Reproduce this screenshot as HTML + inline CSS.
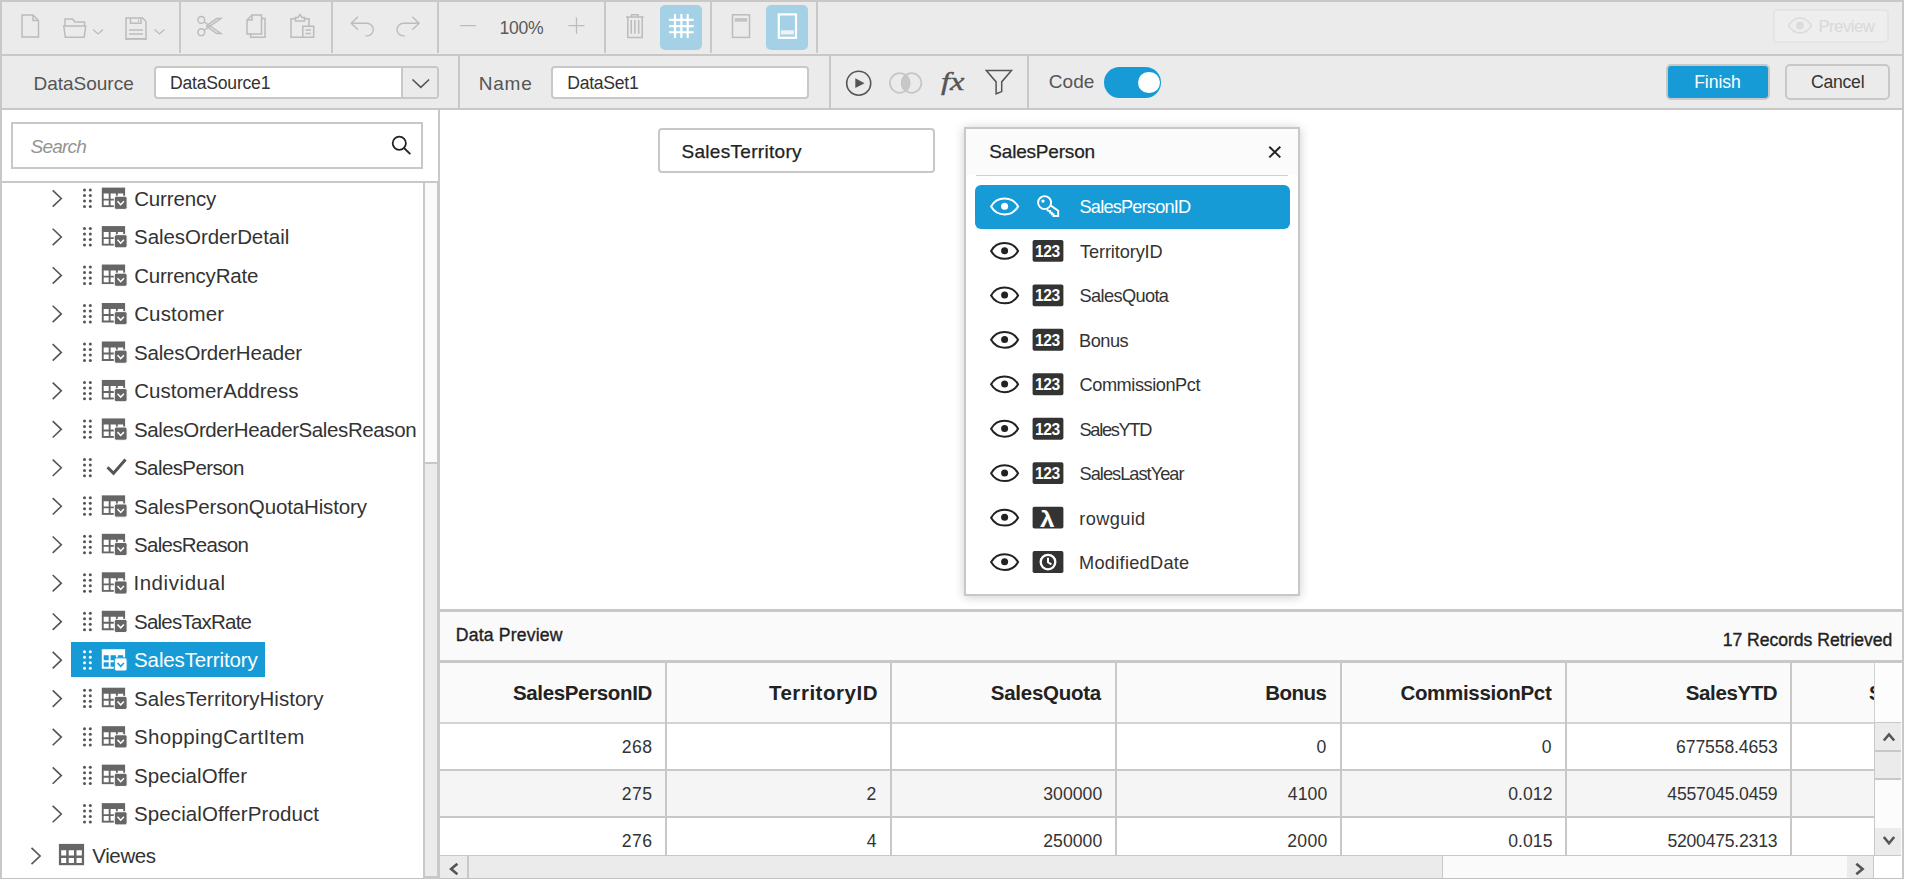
<!DOCTYPE html>
<html>
<head>
<meta charset="utf-8">
<title>DataSet Designer</title>
<style>
*{box-sizing:border-box;margin:0;padding:0}
html,body{width:1905px;height:881px;overflow:hidden;background:#fff}
body{font-family:"Liberation Sans",sans-serif;color:#333;position:relative}
.abs{position:absolute}
.t{position:absolute;white-space:nowrap;line-height:1}
.vsep{position:absolute;width:2px;background:#c8c8c8}
</style>
</head>
<body>
<div class="abs" style="left:2px;top:2px;width:1900px;height:52px;background:#ebebeb"></div>
<div class="abs" style="left:2px;top:54px;width:1900px;height:2px;background:#c8c8c8"></div>
<div class="abs" style="left:2px;top:56px;width:1900px;height:52px;background:#ebebeb"></div>
<div class="abs" style="left:2px;top:108px;width:1900px;height:2px;background:#c8c8c8"></div>
<div class="vsep" style="left:179px;top:2px;height:51px"></div>
<div class="vsep" style="left:331px;top:2px;height:51px"></div>
<div class="vsep" style="left:437px;top:2px;height:51px"></div>
<div class="vsep" style="left:604px;top:2px;height:51px"></div>
<div class="vsep" style="left:710px;top:2px;height:51px"></div>
<div class="vsep" style="left:816px;top:2px;height:51px"></div>
<div class="abs" style="left:660px;top:5px;width:42px;height:45px;border-radius:5px;background:#a5d1e6"></div>
<div class="abs" style="left:766px;top:5px;width:42px;height:45px;border-radius:5px;background:#a5d1e6"></div>
<div class="t" id="zoomtxt" style="top:20.00px;font-size:17.6px;color:#5a5a5a;letter-spacing:-0.300px;left:499.55px;">100%</div>
<div class="abs" style="left:1773px;top:9px;width:116px;height:34px;border:2px solid #e5e5e5;border-radius:4px;background:#eeeeee"></div>
<div class="t" id="prevtxt" style="top:19.00px;font-size:16.8px;color:#d9d9d9;letter-spacing:-0.533px;left:1818.4px;">Preview</div>
<svg class="abs" style="left:0;top:0" width="1905" height="56" viewBox="0 0 1905 56" fill="none" stroke="#bcbcbc" stroke-width="1.5">
<!-- new -->
<path d="M22 15h11l5.5 5.500v16.500h-16.500z M33 15v5.500h5.500"/>
<!-- open -->
<path d="M65 26v-7h7.500l2.500 3h9.500v4 M63.800 26h21.900l-1.500 11.200h-18.900z"/>
<path d="M93 29.500l5 4.500l5-4.500" stroke-width="1.300"/>
<!-- save -->
<path d="M126 18h16.500l3.500 3.500v17.300h-20z M130.500 18v5.300h10.500v-5.300 M129 30h14 M129 34h14"/>
<path d="M125.300 39.200h21.400" stroke-width="1"/>
<path d="M138.500 19.500v2.500" stroke-width="1"/>
<path d="M154.500 29.500l5 4.500l5-4.500" stroke-width="1.300"/>
<!-- cut -->
<circle cx="201.300" cy="19.900" r="3.400"/><circle cx="201.300" cy="32.200" r="3.400"/>
<path d="M204.300 22l16.500 11.500h-4l-10.500-7.300 M204.300 30.100l16.500-11.500h-4l-10.500 7.300"/>
<!-- copy -->
<path d="M247 20l5-5h9.500v19h-14.500z M252 15v5h-5 M261.500 18.500h3.500v18.800h-14.300v-3.300"/>
<!-- paste -->
<path d="M295.500 18.700h-4.500v18.600h11.500 M304.500 18.700h4.500v7.300 M295.500 21v-3.500h2.500l2-3l2 3h2.500v3.500z"/>
<path d="M302.800 26.200h10.900v11.100h-10.900z M305.500 30h5.500 M305.500 33.600h5.500"/>
<!-- undo -->
<path d="M358 16.800l-6.800 6.500l6.800 6.500 M351.500 23.300h15.500a6.300 6.300 0 0 1 0 12.600h-1.500" stroke-width="1.400"/>
<!-- redo -->
<path d="M412.300 16.800l6.800 6.500l-6.800 6.500 M418.800 23.300h-15.500a6.300 6.300 0 0 0 0 12.600h1.500" stroke-width="1.400"/>
<!-- zoom -/+ -->
<path d="M460 25.600h16 M568.500 25.600h16 M576.500 17.500v16.200" stroke-width="1.300"/>
<!-- trash -->
<path d="M626 17.100h17.600 M631.500 17v-2.200h6.500v2.200 M627.800 17.100v20.300h14.400v-20.300 M631.200 20v13.700 M634.900 20v13.700 M638.700 20v13.700"/>
<!-- grid -->
<path d="M675 14.100v23.800 M681.400 14.100v23.800 M687.700 14.100v23.800 M669.100 19.900h24.600 M669.100 26.100h24.600 M669.100 32.300h24.600" stroke="#fff" stroke-width="2.100"/>
<!-- header -->
<rect x="732.500" y="14.800" width="17" height="22.600"/>
<rect x="734.700" y="18.100" width="12.400" height="3.600" fill="#c4c4c4" stroke="none"/>
<!-- footer -->
<rect x="778.800" y="14.400" width="17.200" height="23.400" stroke="#fff" stroke-width="2.200"/>
<rect x="780.900" y="30.300" width="12.900" height="4.100" fill="#f2f2f2" stroke="none"/>
<!-- preview eye -->
<g stroke="#dcdcdc" stroke-width="1.500">
<path d="M1788.500 25.500c4-6.500 8-7.500 11.500-7.500s7.500 1 11.500 7.500c-4 6.500-8 7.500-11.500 7.500s-7.500-1-11.500-7.500z"/>
<circle cx="1800" cy="25.500" r="3.300" fill="#dcdcdc"/>
</g>
</svg>
<div class="t" id="lblds" style="top:74.00px;font-size:19.05px;color:#555;letter-spacing:-0.028px;left:33.5px;">DataSource</div>
<div class="abs" style="left:154px;top:66px;width:285px;height:33px;border:2px solid #c8c8c8;border-radius:4px;background:#fff"></div>
<div class="abs" style="left:401px;top:68px;width:36px;height:29px;border-left:2px solid #c8c8c8;background:#ebebeb;border-radius:0 2px 2px 0"></div>
<div class="t" id="ddtxt" style="top:75.00px;font-size:17.6px;color:#333;letter-spacing:-0.210px;left:169.9px;">DataSource1</div>
<div class="vsep" style="left:458px;top:56px;height:52px"></div>
<div class="t" id="lblname" style="top:74.00px;font-size:19.05px;color:#555;letter-spacing:0.717px;left:478.8px;">Name</div>
<div class="abs" style="left:551px;top:66px;width:258px;height:33px;border:2px solid #c8c8c8;border-radius:4px;background:#fff"></div>
<div class="t" id="nametxt" style="top:75.00px;font-size:17.6px;color:#333;letter-spacing:-0.264px;left:567.2px;">DataSet1</div>
<div class="vsep" style="left:829px;top:56px;height:52px"></div>
<div class="vsep" style="left:1027px;top:56px;height:52px"></div>
<div class="t" id="lblcode" style="top:72.00px;font-size:19.05px;color:#555;letter-spacing:0.083px;left:1048.7px;">Code</div>
<div class="abs" style="left:1103.5px;top:67px;width:57.5px;height:31px;border-radius:16px;background:#179bd7"></div>
<div class="abs" style="left:1138.3px;top:71.8px;width:21.6px;height:21.6px;border-radius:50%;background:#fff"></div>
<div class="abs" style="left:1666px;top:64px;width:104px;height:36px;border:2px solid #c8c8c8;border-radius:5px;background:#179bd7"></div>
<div class="t" id="btnfinish" style="top:74.00px;font-size:17.6px;color:#fff;letter-spacing:-0.060px;left:1694.2px;">Finish</div>
<div class="abs" style="left:1785px;top:64px;width:105px;height:36px;border:2px solid #c8c8c8;border-radius:5px;background:#ebebeb"></div>
<div class="t" id="btncancel" style="top:74.00px;font-size:17.6px;color:#333;letter-spacing:-0.210px;left:1810.9px;">Cancel</div>
<div class="t" style="top:69.00px;font-size:25px;color:#555;left:940.5px;font-family:&quot;Liberation Serif&quot;,serif;-webkit-text-stroke:0.4px #555;transform:scaleX(1.3);transform-origin:0 0;"><i>fx</i></div>
<svg class="abs" style="left:0;top:56px" width="1905" height="54" viewBox="0 56 1905 54" fill="none" stroke="#555" stroke-width="1.6">
<path d="M412.500 79.500l8.300 7.800l8.300-7.800"/>
<circle cx="858.700" cy="83.200" r="12"/>
<path d="M855.300 78.300l9.200 4.900l-9.200 4.900z" fill="#555" stroke="none"/>
<g stroke="#c6c6c6" stroke-width="1.700">
<circle cx="899.700" cy="83" r="9.800"/><circle cx="911.600" cy="83" r="9.800"/>
<path d="M905.650 75.200a9.800 9.800 0 0 1 0 15.600a9.800 9.800 0 0 1 0-15.600z" fill="#c8c8c8"/>
</g>
<path d="M986.300 70.400h25.200l-9.800 11.500v9.700l-5.600 2.200v-11.900z" stroke-width="1.500" stroke-linejoin="miter"/>
</svg>
<div class="abs" style="left:438px;top:110px;width:2px;height:769px;background:#c8c8c8"></div>
<div class="abs" style="left:11px;top:122px;width:412px;height:47px;border:2px solid #c8c8c8;background:#fff"></div>
<div class="t" id="search" style="top:137.00px;font-size:19.05px;color:#949494;letter-spacing:-0.800px;left:30.5px;"><i>Search</i></div>
<div class="abs" style="left:2px;top:181px;width:436px;height:2px;background:#c8c8c8"></div>
<div class="abs" style="left:423px;top:183px;width:15px;height:696px;background:#fafafa;border-left:2px solid #c8c8c8;border-right:1px solid #c8c8c8"></div>
<div class="abs" style="left:425px;top:462px;width:12px;height:417px;background:#ebebeb;border-top:2px solid #c8c8c8"></div>
<div class="t" id="tree0" style="top:189.00px;font-size:20.5px;color:#333;letter-spacing:-0.143px;left:134.15px;">Currency</div>
<div class="t" id="tree1" style="top:227.00px;font-size:20.5px;color:#333;letter-spacing:-0.060px;left:134.05px;">SalesOrderDetail</div>
<div class="t" id="tree2" style="top:266.00px;font-size:20.5px;color:#333;letter-spacing:-0.209px;left:134.15px;">CurrencyRate</div>
<div class="t" id="tree3" style="top:304.00px;font-size:20.5px;color:#333;letter-spacing:0.157px;left:134.15px;">Customer</div>
<div class="t" id="tree4" style="top:343.00px;font-size:20.5px;color:#333;letter-spacing:-0.190px;left:134.05px;">SalesOrderHeader</div>
<div class="t" id="tree5" style="top:381.00px;font-size:20.5px;color:#333;letter-spacing:0.025px;left:134.15px;">CustomerAddress</div>
<div class="t" id="tree6" style="top:420.00px;font-size:20.5px;color:#333;letter-spacing:-0.398px;left:134.05px;">SalesOrderHeaderSalesReason</div>
<div class="t" id="tree7" style="top:458.00px;font-size:20.5px;color:#333;letter-spacing:-0.600px;left:134.05px;">SalesPerson</div>
<div class="t" id="tree8" style="top:497.00px;font-size:20.5px;color:#333;letter-spacing:-0.132px;left:134.05px;">SalesPersonQuotaHistory</div>
<div class="t" id="tree9" style="top:535.00px;font-size:20.5px;color:#333;letter-spacing:-0.715px;left:134.05px;">SalesReason</div>
<div class="t" id="tree10" style="top:573.00px;font-size:20.5px;color:#333;letter-spacing:0.567px;left:133.4px;">Individual</div>
<div class="t" id="tree11" style="top:612.00px;font-size:20.5px;color:#333;letter-spacing:-0.777px;left:134.05px;">SalesTaxRate</div>
<div class="abs" style="left:71px;top:642px;width:194px;height:35px;background:#179bd7"></div>
<div class="t" id="tree12" style="top:650.00px;font-size:20.5px;color:#fff;letter-spacing:-0.123px;left:134.05px;">SalesTerritory</div>
<div class="t" id="tree13" style="top:689.00px;font-size:20.5px;color:#333;letter-spacing:0.012px;left:134.05px;">SalesTerritoryHistory</div>
<div class="t" id="tree14" style="top:727.00px;font-size:20.5px;color:#333;letter-spacing:0.333px;left:134.05px;">ShoppingCartItem</div>
<div class="t" id="tree15" style="top:766.00px;font-size:20.5px;color:#333;letter-spacing:0.059px;left:134.05px;">SpecialOffer</div>
<div class="t" id="tree16" style="top:804.00px;font-size:20.5px;color:#333;letter-spacing:0.106px;left:134.05px;">SpecialOfferProduct</div>
<svg class="abs" style="left:0;top:110px" width="440" height="771" viewBox="0 110 440 771">
<defs>
<g id="tbl">
<rect x="0" y="0" width="23.300" height="19.500" fill="currentColor"/>
<path d="M1.900 6h5v5.100h-5z M8.800 6h5.300v5.100h-5.300z M16 6h5.400v5.100h-5.400z M1.900 13h5v4.600h-5z M8.800 13h5.300v4.600h-5.300z M16 13h5.400v4.600h-5.400z" fill="var(--bg,#fff)"/>
</g>
<g id="tblb">
<use href="#tbl"/>
<rect x="12.500" y="8.600" width="12.800" height="13.200" rx="2" fill="currentColor" stroke="var(--bg,#fff)" stroke-width="1"/>
<path d="M15.700 13.700l3.200 3.400l3.200-3.400" fill="none" stroke="var(--bg,#fff)" stroke-width="1.500"/>
</g>
<g id="dots" fill="currentColor">
<circle cx="1.2" cy="1.2" r="1.500"/><circle cx="7.0" cy="1.2" r="1.500"/><circle cx="1.2" cy="6.7" r="1.500"/><circle cx="7.0" cy="6.7" r="1.500"/><circle cx="1.2" cy="12.2" r="1.500"/><circle cx="7.0" cy="12.2" r="1.500"/><circle cx="1.2" cy="17.6" r="1.500"/><circle cx="7.0" cy="17.6" r="1.500"/>
</g>
<path id="chev" d="M0 0l8.600 8.200l-8.600 8.200" fill="none" stroke="#555" stroke-width="1.600"/>
</defs>
<g fill="none" stroke="#222" stroke-width="1.800"><circle cx="399.300" cy="143.200" r="6.600"/><path d="M404 148l6.300 6.200"/></g>
<use href="#chev" x="52.700" y="190.30"/><use href="#dots" x="83.300" y="188.90" style="color:#555"/><use href="#tblb" x="101.800" y="187.60" style="color:#666;"/>
<use href="#chev" x="52.700" y="228.77"/><use href="#dots" x="83.300" y="227.37" style="color:#555"/><use href="#tblb" x="101.800" y="226.07" style="color:#666;"/>
<use href="#chev" x="52.700" y="267.24"/><use href="#dots" x="83.300" y="265.84" style="color:#555"/><use href="#tblb" x="101.800" y="264.54" style="color:#666;"/>
<use href="#chev" x="52.700" y="305.71"/><use href="#dots" x="83.300" y="304.31" style="color:#555"/><use href="#tblb" x="101.800" y="303.01" style="color:#666;"/>
<use href="#chev" x="52.700" y="344.18"/><use href="#dots" x="83.300" y="342.78" style="color:#555"/><use href="#tblb" x="101.800" y="341.48" style="color:#666;"/>
<use href="#chev" x="52.700" y="382.65"/><use href="#dots" x="83.300" y="381.25" style="color:#555"/><use href="#tblb" x="101.800" y="379.95" style="color:#666;"/>
<use href="#chev" x="52.700" y="421.12"/><use href="#dots" x="83.300" y="419.72" style="color:#555"/><use href="#tblb" x="101.800" y="418.42" style="color:#666;"/>
<use href="#chev" x="52.700" y="459.59"/><use href="#dots" x="83.300" y="458.19" style="color:#555"/><path d="M107.500 467.29l6 6l12-13.800" fill="none" stroke="#555" stroke-width="3"/>
<use href="#chev" x="52.700" y="498.06"/><use href="#dots" x="83.300" y="496.66" style="color:#555"/><use href="#tblb" x="101.800" y="495.36" style="color:#666;"/>
<use href="#chev" x="52.700" y="536.53"/><use href="#dots" x="83.300" y="535.13" style="color:#555"/><use href="#tblb" x="101.800" y="533.83" style="color:#666;"/>
<use href="#chev" x="52.700" y="575.00"/><use href="#dots" x="83.300" y="573.60" style="color:#555"/><use href="#tblb" x="101.800" y="572.30" style="color:#666;"/>
<use href="#chev" x="52.700" y="613.47"/><use href="#dots" x="83.300" y="612.07" style="color:#555"/><use href="#tblb" x="101.800" y="610.77" style="color:#666;"/>
<use href="#chev" x="52.700" y="651.94"/><use href="#dots" x="83.300" y="650.54" style="color:#fff"/><use href="#tblb" x="101.800" y="649.24" style="color:#fff;--bg:#179bd7;"/>
<use href="#chev" x="52.700" y="690.41"/><use href="#dots" x="83.300" y="689.01" style="color:#555"/><use href="#tblb" x="101.800" y="687.71" style="color:#666;"/>
<use href="#chev" x="52.700" y="728.88"/><use href="#dots" x="83.300" y="727.48" style="color:#555"/><use href="#tblb" x="101.800" y="726.18" style="color:#666;"/>
<use href="#chev" x="52.700" y="767.35"/><use href="#dots" x="83.300" y="765.95" style="color:#555"/><use href="#tblb" x="101.800" y="764.65" style="color:#666;"/>
<use href="#chev" x="52.700" y="805.82"/><use href="#dots" x="83.300" y="804.42" style="color:#555"/><use href="#tblb" x="101.800" y="803.12" style="color:#666;"/>
<use href="#chev" x="31.500" y="847.800"/><g><rect x="58.900" y="843.900" width="25.200" height="21.300" fill="#666"/><path d="M61.200 850.200h5v5.300h-5z M68.700 850.200h5.300v5.300h-5.300z M76.500 850.200h5.300v5.300h-5.300z M61.200 858h5v5h-5z M68.700 858h5.300v5h-5.300z M76.500 858h5.300v5h-5.300z" fill="#fff"/></g>
</svg>
<div class="t" id="views" style="top:846.00px;font-size:20.5px;color:#333;letter-spacing:-0.370px;left:92.25px;">Viewes</div>
<div class="abs" style="left:658px;top:128px;width:277px;height:45px;border:2px solid #c8c8c8;border-radius:4px;background:#fff"></div>
<div class="t" id="stbox" style="top:142.00px;font-size:19.05px;color:#222;letter-spacing:0.296px;left:681.45px;-webkit-text-stroke:0.25px #222;">SalesTerritory</div>
<div class="abs" style="left:964px;top:127px;width:336px;height:469px;border:2px solid #c8c8c8;background:#fff;box-shadow:0 1px 10px rgba(0,0,0,.2)"></div>
<div class="abs" style="left:966px;top:129px;width:332px;height:46px;background:#fbfbfb"></div>
<div class="abs" style="left:976px;top:175px;width:312px;height:1px;background:#cfcfcf"></div>
<div class="t" id="pophdr" style="top:142.00px;font-size:19.05px;color:#222;letter-spacing:-0.200px;left:989.25px;-webkit-text-stroke:0.25px #222;">SalesPerson</div>
<div class="abs" style="left:975px;top:185px;width:315px;height:44px;background:#179bd7;border-radius:6px"></div>
<svg class="abs" style="left:940px;top:110px" width="400" height="500" viewBox="940 110 400 500">
<defs>
<g id="eye" fill="none" stroke="currentColor" stroke-width="2" stroke-linejoin="miter">
<path d="M-13.500 0A15.500 15.500 0 0 1 13.500 0A15.500 15.500 0 0 1 -13.500 0z"/>
<circle cx="0" cy="-0.300" r="3.500" fill="currentColor" stroke="none"/>
</g>
<rect id="tybg" x="0" y="0" width="30.800" height="21.900" rx="1.800" fill="#333"/>
</defs>
<path d="M1269.300 146.800l11 10.600 M1280.300 146.800l-11 10.600" stroke="#222" stroke-width="2" fill="none"/>
<use href="#eye" x="1004.600" y="206.50" style="color:#fff"/><g transform="translate(1037 195.30)" fill="none" stroke="#fff" stroke-width="1.900"><circle cx="7.600" cy="7.300" r="6.500"/><circle cx="6" cy="5.800" r="1.700" fill="#fff" stroke="none"/><path d="M13.500 10.100l7.700 5.300v5.300h-4.700v-1.700h-1.700v-1.700h-1.700v-1.700h-1.900l-1.200-1.700"/></g>
<use href="#eye" x="1004.600" y="250.95" style="color:#222"/><use href="#tybg" x="1032.600" y="239.95"/>
<use href="#eye" x="1004.600" y="295.40" style="color:#222"/><use href="#tybg" x="1032.600" y="284.40"/>
<use href="#eye" x="1004.600" y="339.85" style="color:#222"/><use href="#tybg" x="1032.600" y="328.85"/>
<use href="#eye" x="1004.600" y="384.30" style="color:#222"/><use href="#tybg" x="1032.600" y="373.30"/>
<use href="#eye" x="1004.600" y="428.75" style="color:#222"/><use href="#tybg" x="1032.600" y="417.75"/>
<use href="#eye" x="1004.600" y="473.20" style="color:#222"/><use href="#tybg" x="1032.600" y="462.20"/>
<use href="#eye" x="1004.600" y="517.65" style="color:#222"/><use href="#tybg" x="1032.600" y="506.65"/>
<use href="#eye" x="1004.600" y="562.10" style="color:#222"/><use href="#tybg" x="1032.600" y="551.10"/><g fill="none" stroke="#fff" stroke-width="1.800"><circle cx="1048" cy="562.10" r="7.300" stroke-width="2.300"/><path d="M1048 557.80v4.500l3.400 2" stroke-width="2"/></g>
</svg>
<div class="t" id="fld0" style="top:198.00px;font-size:18.2px;color:#fff;letter-spacing:-0.812px;left:1079.55px;">SalesPersonID</div>
<div class="t" id="fld1" style="top:243.00px;font-size:18.2px;color:#333;letter-spacing:-0.125px;left:1080.05px;">TerritoryID</div>
<div class="t" style="top:244.00px;font-size:15.6px;color:#fff;left:1034.9px;font-weight:bold;letter-spacing:-0.35px;">123</div>
<div class="t" id="fld2" style="top:287.00px;font-size:18.2px;color:#333;letter-spacing:-0.628px;left:1079.55px;">SalesQuota</div>
<div class="t" style="top:288.00px;font-size:15.6px;color:#fff;left:1034.9px;font-weight:bold;letter-spacing:-0.35px;">123</div>
<div class="t" id="fld3" style="top:332.00px;font-size:18.2px;color:#333;letter-spacing:-0.475px;left:1079.05px;">Bonus</div>
<div class="t" style="top:333.00px;font-size:15.6px;color:#fff;left:1034.9px;font-weight:bold;letter-spacing:-0.35px;">123</div>
<div class="t" id="fld4" style="top:376.00px;font-size:18.2px;color:#333;letter-spacing:-0.450px;left:1079.55px;">CommissionPct</div>
<div class="t" style="top:377.00px;font-size:15.6px;color:#fff;left:1034.9px;font-weight:bold;letter-spacing:-0.35px;">123</div>
<div class="t" id="fld5" style="top:421.00px;font-size:18.2px;color:#333;letter-spacing:-1.307px;left:1079.55px;">SalesYTD</div>
<div class="t" style="top:422.00px;font-size:15.6px;color:#fff;left:1034.9px;font-weight:bold;letter-spacing:-0.35px;">123</div>
<div class="t" id="fld6" style="top:465.00px;font-size:18.2px;color:#333;letter-spacing:-0.975px;left:1079.55px;">SalesLastYear</div>
<div class="t" style="top:466.00px;font-size:15.6px;color:#fff;left:1034.9px;font-weight:bold;letter-spacing:-0.35px;">123</div>
<div class="t" id="fld7" style="top:510.00px;font-size:18.2px;color:#333;letter-spacing:0.367px;left:1079.3px;">rowguid</div>
<div class="t" style="top:509.00px;font-size:22.5px;color:#fff;left:1040.2px;font-weight:bold;transform:scaleX(1.16);transform-origin:0 0;">λ</div>
<div class="t" id="fld8" style="top:554.00px;font-size:18.2px;color:#333;letter-spacing:0.273px;left:1079.05px;">ModifiedDate</div>
<div class="abs" style="left:440px;top:609px;width:1462px;height:3px;background:#c8c8c8"></div>
<div class="abs" style="left:440px;top:612px;width:1462px;height:48px;background:#fafafa"></div>
<div class="abs" style="left:440px;top:660px;width:1462px;height:3px;background:#c8c8c8"></div>
<div class="t" id="dp" style="top:627.00px;font-size:17.6px;color:#222;letter-spacing:0.186px;left:455.8px;-webkit-text-stroke:0.35px #222;">Data Preview</div>
<div class="t" id="rec" style="top:632.00px;font-size:17.6px;color:#222;letter-spacing:-0.024px;left:1722.65px;-webkit-text-stroke:0.35px #222;">17 Records Retrieved</div>
<div class="abs" style="left:440px;top:663px;width:1435px;height:59px;background:#fafafa"></div>
<div class="abs" style="left:440px;top:722px;width:1435px;height:2px;background:#d4d4d4"></div>
<div class="abs" style="left:440px;top:724px;width:1435px;height:45px;background:#fff"></div>
<div class="abs" style="left:440px;top:769px;width:1435px;height:2px;background:#c8c8c8"></div>
<div class="abs" style="left:440px;top:771px;width:1435px;height:45px;background:#f5f5f5"></div>
<div class="abs" style="left:440px;top:816px;width:1435px;height:2px;background:#c8c8c8"></div>
<div class="abs" style="left:440px;top:818px;width:1435px;height:38px;background:#fff"></div>
<div class="abs" style="left:665px;top:663px;width:2px;height:193px;background:#c8c8c8"></div>
<div class="t" id="h0" style="top:683.00px;font-size:20.5px;color:#222;letter-spacing:-0.350px;left:512.95px;font-weight:bold;">SalesPersonID</div>
<div class="t" id="c0_0" style="top:739.00px;font-size:17.6px;color:#333;letter-spacing:0.475px;left:621.7px;">268</div>
<div class="t" id="c1_0" style="top:786.00px;font-size:17.6px;color:#333;letter-spacing:0.475px;left:621.7px;">275</div>
<div class="t" id="c2_0" style="top:833.00px;font-size:17.6px;color:#333;letter-spacing:0.475px;left:621.7px;">276</div>
<div class="abs" style="left:890px;top:663px;width:2px;height:193px;background:#c8c8c8"></div>
<div class="t" id="h1" style="top:683.00px;font-size:20.5px;color:#222;letter-spacing:0.535px;left:768.9px;font-weight:bold;">TerritoryID</div>
<div class="t" id="c1_1" style="top:786.00px;font-size:17.6px;color:#333;letter-spacing:0.000px;left:866.55px;">2</div>
<div class="t" id="c2_1" style="top:833.00px;font-size:17.6px;color:#333;letter-spacing:0.000px;left:866.75px;">4</div>
<div class="abs" style="left:1115px;top:663px;width:2px;height:193px;background:#c8c8c8"></div>
<div class="t" id="h2" style="top:683.00px;font-size:20.5px;color:#222;letter-spacing:-0.261px;left:990.8px;font-weight:bold;">SalesQuota</div>
<div class="t" id="c1_2" style="top:786.00px;font-size:17.6px;color:#333;letter-spacing:0.050px;left:1043.25px;">300000</div>
<div class="t" id="c2_2" style="top:833.00px;font-size:17.6px;color:#333;letter-spacing:0.050px;left:1043.25px;">250000</div>
<div class="abs" style="left:1340px;top:663px;width:2px;height:193px;background:#c8c8c8"></div>
<div class="t" id="h3" style="top:683.00px;font-size:20.5px;color:#222;letter-spacing:-0.525px;left:1265.35px;font-weight:bold;">Bonus</div>
<div class="t" id="c0_3" style="top:739.00px;font-size:17.6px;color:#333;letter-spacing:0.000px;left:1316.6px;">0</div>
<div class="t" id="c1_3" style="top:786.00px;font-size:17.6px;color:#333;letter-spacing:0.167px;left:1287.7px;">4100</div>
<div class="t" id="c2_3" style="top:833.00px;font-size:17.6px;color:#333;letter-spacing:0.333px;left:1287.2px;">2000</div>
<div class="abs" style="left:1565px;top:663px;width:2px;height:193px;background:#c8c8c8"></div>
<div class="t" id="h4" style="top:683.00px;font-size:20.5px;color:#222;letter-spacing:-0.300px;left:1400.4px;font-weight:bold;">CommissionPct</div>
<div class="t" id="c0_4" style="top:739.00px;font-size:17.6px;color:#333;letter-spacing:0.000px;left:1541.8px;">0</div>
<div class="t" id="c1_4" style="top:786.00px;font-size:17.6px;color:#333;letter-spacing:0.050px;left:1508.25px;">0.012</div>
<div class="t" id="c2_4" style="top:833.00px;font-size:17.6px;color:#333;letter-spacing:0.050px;left:1508.25px;">0.015</div>
<div class="abs" style="left:1790px;top:663px;width:2px;height:193px;background:#c8c8c8"></div>
<div class="t" id="h5" style="top:683.00px;font-size:20.5px;color:#222;letter-spacing:-0.393px;left:1685.8px;font-weight:bold;">SalesYTD</div>
<div class="t" id="c0_5" style="top:739.00px;font-size:17.6px;color:#333;letter-spacing:-0.110px;left:1676.05px;">677558.4653</div>
<div class="t" id="c1_5" style="top:786.00px;font-size:17.6px;color:#333;letter-spacing:-0.205px;left:1667.35px;">4557045.0459</div>
<div class="t" id="c2_5" style="top:833.00px;font-size:17.6px;color:#333;letter-spacing:-0.218px;left:1667.4px;">5200475.2313</div>
<div class="t" id="h6" style="top:684.00px;font-size:19.7px;color:#222;left:1869px;font-weight:bold;">S</div>
<div class="abs" style="left:1874px;top:663px;width:28px;height:59px;background:#fdfdfd;border-left:1px solid #d0d0d0"></div>
<div class="abs" style="left:1874px;top:722px;width:28px;height:134px;background:#fcfcfc;border-left:1px solid #c8c8c8"></div>
<div class="abs" style="left:1875px;top:722px;width:26px;height:30px;background:#ebebeb;border-top:1px solid #c8c8c8;border-bottom:2px solid #c8c8c8"></div>
<div class="abs" style="left:1875px;top:752px;width:26px;height:28px;background:#ebebeb;border-bottom:2px solid #c8c8c8"></div>
<div class="abs" style="left:1875px;top:828px;width:26px;height:28px;background:#ebebeb;border-bottom:1px solid #c8c8c8"></div>
<div class="abs" style="left:440px;top:855px;width:1434px;height:23px;background:#fafafa;border-top:1px solid #c8c8c8;border-right:1px solid #c8c8c8"></div>
<div class="abs" style="left:440px;top:856px;width:29px;height:22px;background:#ebebeb;border-right:2px solid #c8c8c8"></div>
<div class="abs" style="left:469px;top:856px;width:974px;height:22px;background:#ebebeb;border-right:1px solid #c8c8c8"></div>
<div class="abs" style="left:1847px;top:856px;width:26px;height:22px;background:#ebebeb"></div>
<div class="abs" style="left:1875px;top:856px;width:27px;height:22px;background:#fff"></div>
<svg class="abs" style="left:440px;top:720px" width="1465" height="161" viewBox="440 720 1465 161" fill="none" stroke="#555" stroke-width="2.600">
<path d="M1883.800 740.500l5.200-6l5.200 6"/>
<path d="M1883.800 837l5.200 6.300l5.200-6.300"/>
<path d="M457.400 863.700l-6.300 5.300l6.300 5.300"/>
<path d="M1856.300 863.700l6.300 5.300l-6.300 5.300"/>
</svg>
<div class="abs" style="left:0px;top:0px;width:1904px;height:2px;background:#c8c8c8"></div>
<div class="abs" style="left:0px;top:0px;width:2px;height:879px;background:#c8c8c8"></div>
<div class="abs" style="left:1902px;top:0px;width:2px;height:879px;background:#c8c8c8"></div>
<div class="abs" style="left:0px;top:878px;width:1904px;height:1px;background:#c2c2c2"></div>
<div class="abs" style="left:0px;top:879px;width:1905px;height:2px;background:#fff"></div>
<div class="abs" style="left:1904px;top:0px;width:1px;height:881px;background:#fff"></div>
<div class="abs" style="left:423px;top:876px;width:17px;height:3px;background:#c8c8c8"></div>
</body>
</html>
